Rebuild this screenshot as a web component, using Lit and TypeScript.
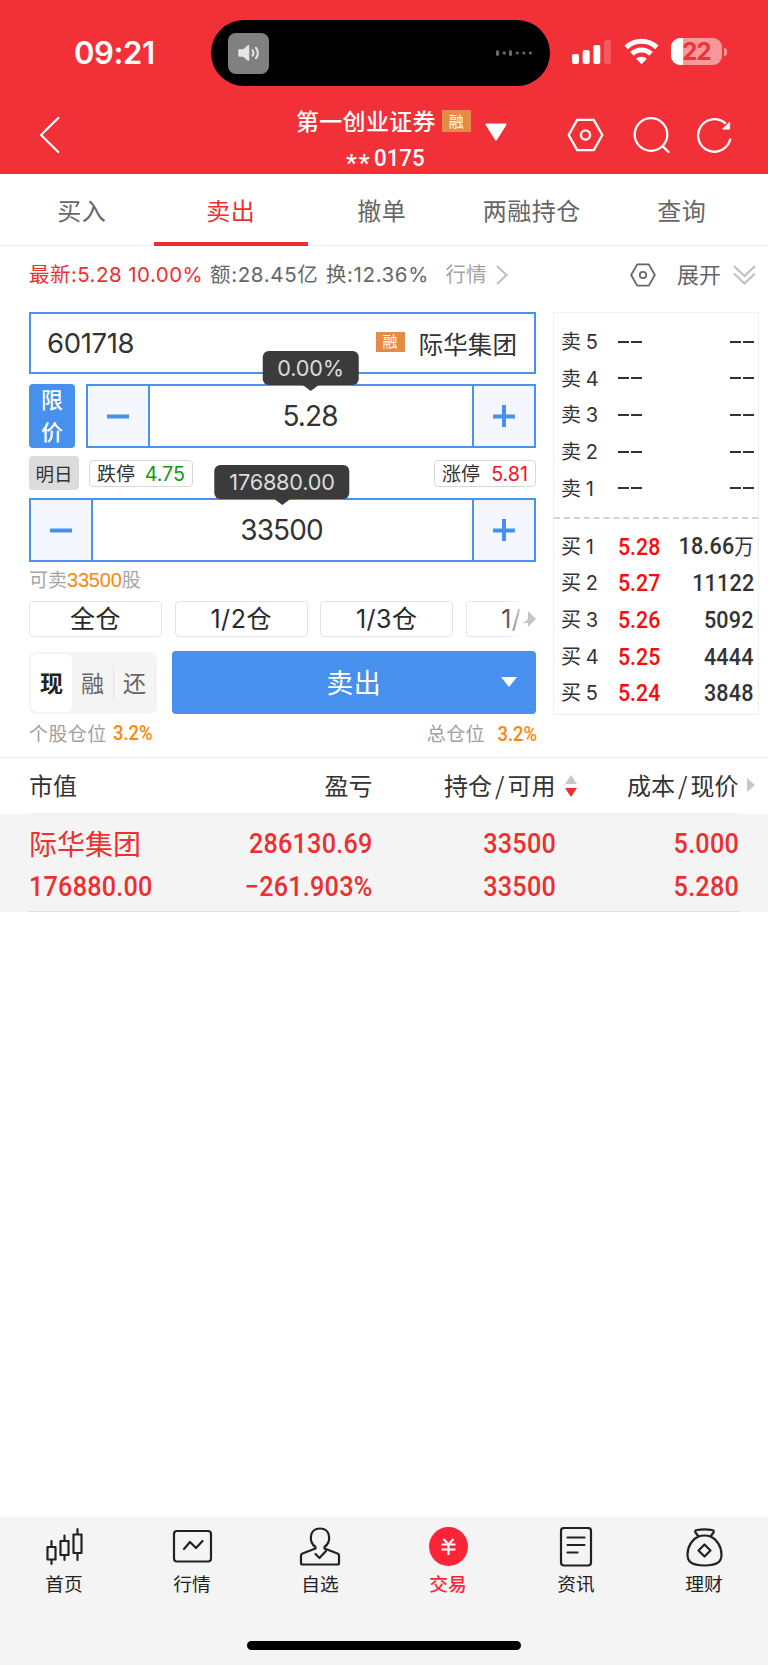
import { LitElement, html, css, svg } from "lit";
import { customElement, property } from "lit/decorators.js";
import { classMap } from "lit/directives/class-map.js";

const hexagon = (w: number, h: number, stroke: number) => html`
  <svg width=${w} height=${h} viewBox="0 0 38 34" fill="none" stroke="currentColor" stroke-width=${stroke} stroke-linejoin="round">
    <path d="M10.5 1.5h17L36.3 17l-8.8 15.5h-17L1.7 17z" /><circle cx="19" cy="17" r="4.7" />
  </svg>`;

@customElement("status-bar")
export class StatusBar extends LitElement {
  static styles = css`
    :host { display: flex; height: 106px; align-items: flex-start; color: #fff; }
    .time { width: 211px; padding: 33px 0 0 74px; box-sizing: border-box; font: 600 31px/40px Inter, sans-serif; letter-spacing: -0.4px; }
    .island { margin-top: 20px; width: 338.5px; height: 66px; border-radius: 33px; background: #000; box-sizing: border-box; padding: 0 17px; display: flex; align-items: center; justify-content: space-between; }
    .tile { width: 41px; height: 41px; border-radius: 8px; background: #808080; display: flex; align-items: center; justify-content: center; }
    .signal { margin: 39px 0 0 22.5px; }
    .wifi { margin: 38px 0 0 13px; }
    .battery { margin: 38px 0 0 12px; width: 51px; height: 27px; border-radius: 9px; background: linear-gradient(90deg, #fff 12px, #f9989b 12px); color: #f23037; font: 700 24px/27px Inter, sans-serif; text-align: center; letter-spacing: -0.9px; }
    .nub { margin: 48px 0 0 2px; width: 3px; height: 8px; border-radius: 0 3px 3px 0; background: #f9989b; }
  `;
  render() {
    return html`
      <div class="time">09:21</div>
      <div class="island">
        <div class="tile">
          <svg width="22" height="18" viewBox="0 0 22 18" fill="none">
            <path d="M1.5 5.2h3.7L9.6 1.4c.7-.6 1.6-.3 1.6.6v14c0 .9-.9 1.2-1.6.6l-4.4-3.8H1.5C.7 12.8 .3 12.4 .3 11.6V6.4C.3 5.6 .7 5.2 1.5 5.2z" fill="#e6e6e6" />
            <path d="M14.5 6.2q1.9 2.800 0 5.600M18 3.800q3.700 5.200 0 10.400" stroke="#e6e6e6" stroke-width="2" stroke-linecap="round" />
          </svg>
        </div>
        <svg width="38" height="8" viewBox="0 0 38 8" fill="#6a6a6a">
          <rect x="1" y="1" width="3" height="6" rx="1.5" /><circle cx="9.2" cy="4" r="1.700" /><rect x="14" y="1" width="3" height="6" rx="1.5" />
          <circle cx="22.2" cy="4" r="1.6" /><circle cx="28.8" cy="4" r="1.6" /><circle cx="35.4" cy="4" r="1.6" />
        </svg>
      </div>
      <svg class="signal" width="39" height="25" viewBox="0 0 39 25" fill="#fff">
        <rect x="0" y="15" width="7" height="10" rx="2" /><rect x="10.7" y="11" width="7" height="14" rx="2" />
        <rect x="21.3" y="6" width="7" height="19" rx="2" /><rect x="32" y="1" width="7" height="24" rx="2" opacity=".2" />
      </svg>
      <svg class="wifi" width="35" height="27" viewBox="0 0 35 27" fill="none" stroke="#fff" stroke-width="5">
        <path d="M2.2 9.4a22 22 0 0 1 30.6 0M8 15.9a13.5 13.5 0 0 1 19 0" />
        <path d="M17.5 26.2l-5.400-5.400a7.800 7.800 0 0 1 10.800 0z" fill="#fff" stroke="none" />
      </svg>
      <div class="battery">22</div><div class="nub"></div>`;
  }
}

@customElement("account-bar")
export class AccountBar extends LitElement {
  static styles = css`
    :host { display: grid; grid-template-columns: 296px 1fr 201px; height: 68px; color: #fff; }
    .back { margin: 10px 0 0 39px; }
    .name { display: flex; height: 30px; align-items: center; font: 500 23px/28px "Noto Sans CJK SC", sans-serif; letter-spacing: 0.3px; }
    .name-text { margin-top: -3px; }
    .badge { width: 29px; height: 22px; margin-left: 6px; background: #e48b46; font-size: 15px; line-height: 21px; text-align: center; font-weight: 400; letter-spacing: 0; }
    .number { display: flex; padding-left: 50px; font: 500 24.500px/28px Roboto, sans-serif; margin-top: 8px; }
    .stars { letter-spacing: 2px; margin: 5px 2px 0 0; height: 20px; }
    .digits { transform: scaleX(0.91); transform-origin: left; }
    .account { position: relative; }
    .caret { position: absolute; left: 189px; top: 17px; }
    .tools { display: flex; align-items: flex-start; padding-top: 11px; }
    .tools svg:nth-child(1) { margin-top: 1px; }
    .tools svg:nth-child(2) { margin-left: 29px; }
    .tools svg:nth-child(3) { margin-left: 26px; }
  `;
  render() {
    return html`
      <svg class="back" width="22" height="38" viewBox="0 0 22 38" fill="none" stroke="#fff" stroke-width="2.2" stroke-linecap="round" stroke-linejoin="round"><path d="M19.3 2L2 19l17.3 17" /></svg>
      <div class="account">
        <div class="name"><span class="name-text">第一创业证券</span><span class="badge">融</span></div>
        <div class="number"><span class="stars">**</span><span class="digits">0175</span></div>
        <svg class="caret" width="22" height="18" viewBox="0 0 22 18" fill="#fff" stroke="#fff" stroke-width="2" stroke-linejoin="round"><path d="M1.5 1.5h19L11 16.5z" /></svg>
      </div>
      <div class="tools">
        ${hexagon(37, 34, 2.4)}
        <svg width="37" height="37" viewBox="0 0 37 37" fill="none" stroke="#fff" stroke-width="2.3" stroke-linecap="round"><circle cx="18" cy="17.5" r="16.3" /><path d="M29.5 29.2l6 5.800" /></svg>
        <svg width="37" height="37" viewBox="0 0 37 37" fill="none" stroke="#fff" stroke-width="2.3" stroke-linecap="round"><path d="M34.2 22.5A16.3 16.3 0 1 1 29 6" /><path d="M33.6 5.500v6.500h-6.500z" fill="#fff" stroke-width="1" stroke-linejoin="round" /></svg>
      </div>`;
  }
}

@customElement("value-stepper")
export class ValueStepper extends LitElement {
  @property() value = "";
  @property() hint = "";
  static styles = css`
    :host { position: relative; display: flex; height: 64px; box-sizing: border-box; border: 2px solid #4a92ee; flex: 1; }
    .key { width: 62px; background: #f4f8fe; display: flex; align-items: center; justify-content: center; }
    .minus { border-right: 2px solid #4a92ee; box-sizing: border-box; }
    .plus { border-left: 2px solid #4a92ee; box-sizing: border-box; }
    .value { flex: 1; text-align: center; font: 400 28px/60px Inter, "Noto Sans CJK SC", sans-serif; color: #333; letter-spacing: -0.9px; text-indent: -2px; }
    .hint { position: absolute; bottom: 61px; left: calc(50% - 0.5px); transform: translateX(-50%); background: #3b3b3b; border-radius: 6px; color: #dcdcdc; font: 400 21.700px/34px Inter, sans-serif; padding: 0 15px; letter-spacing: -0.2px; }
    .hint::after { content: ""; position: absolute; left: 50%; top: 100%; margin-left: -8px; border: 8px solid transparent; border-bottom-width: 0; border-top: 6px solid #3b3b3b; }
  `;
  render() {
    return html`
      <div class="key minus"><svg width="22" height="22"><rect y="9.5" width="22" height="4" fill="#4790ee" /></svg></div>
      <div class="value">${this.value}</div>
      <div class="key plus"><svg width="22" height="22"><path d="M0 9.500h22v4H0zM9 0h4v22H9z" fill="#4790ee" /></svg></div>
      <div class="hint">${this.hint}</div>`;
  }
}

@customElement("order-form")
export class OrderForm extends LitElement {
  static styles = css`
    :host { display: block; width: 507px; font-family: Inter, "Noto Sans CJK SC", sans-serif; color: #333; }
    .stock { height: 62px; box-sizing: border-box; border: 2px solid #4a92ee; display: flex; align-items: center; padding: 0 17px 0 16px; }
    .code { flex: 1; font-size: 27.500px; letter-spacing: -0.35px; }
    .badge { width: 29px; height: 20px; background: #e48b46; color: #fff; font-size: 15px; line-height: 19px; text-align: center; margin-top: -2px; }
    .stock-name { font-size: 24.500px; margin-left: 14px; letter-spacing: 0.1px; }
    .price { display: flex; margin-top: 10px; gap: 11px; }
    .type { width: 46px; height: 64px; border-radius: 4px; background: #4790ee; color: #fff; font-size: 22px; line-height: 32px; font-weight: 500; text-align: center; }
    .limits { display: flex; align-items: center; height: 50px; }
    .day { width: 50px; height: 34px; border-radius: 4px; background: #dcdcdc; font-size: 18.500px; line-height: 36px; text-align: center; margin-right: 10px; }
    .pill { box-sizing: border-box; height: 27px; border: 1px solid #d8d8d8; border-radius: 4px; font-size: 19px; line-height: 27px; padding: 0 7px; display: flex; justify-content: space-between; }
    .down { width: 104px; } .down b { color: #0c9c0c; }
    .up { width: 102px; margin-left: auto; } .up b { color: #fa1028; }
    .pill b { font-weight: 400; font-size: 19.700px; }
    .available { height: 39px; line-height: 38px; font-size: 19px; color: #a5a5a5; }
    .available b { font: 400 20px "Liberation Sans", sans-serif; color: #ff860d; letter-spacing: -0.2px; }
    .portions { position: relative; display: flex; gap: 12.400px; overflow: hidden; height: 36px; }
    .portion { flex: none; width: 133.200px; box-sizing: border-box; border: 1.500px solid #e4e4e4; border-radius: 4px; text-align: center; font-size: 25px; line-height: 35px; color: #2a2a2a; letter-spacing: 0.5px; }
    .fade { position: absolute; right: 0; top: 0; width: 34px; height: 36px; background: linear-gradient(90deg, #fff0, #fff 70%); }
    .more { position: absolute; right: 0; top: 10px; }
    .actions { display: flex; margin-top: 14px; height: 63px; gap: 14.500px; }
    .modes { width: 128px; box-sizing: border-box; height: 62px; margin-top: 1px; border-radius: 7px; background: #f4f4f4; padding: 2px; display: flex; align-items: center; font-size: 23px; color: #666; }
    .mode { flex: 1; text-align: center; line-height: 34px; padding-top: 1px; }
    .mode + .mode + .mode { border-left: 1px solid #e4e4e4; }
    .mode.on { flex: none; width: 41px; height: 57px; line-height: 58px; border-radius: 6px; background: #fff; font-weight: 700; color: #222; }
    .sell { position: relative; flex: 1; border-radius: 4px; background: #4790ee; color: #fff; font-size: 27px; line-height: 65px; text-align: center; letter-spacing: 0.4px; }
    .sell svg { position: absolute; right: 19px; top: 26px; }
    .share { display: flex; height: 37px; align-items: center; font-size: 19px; color: #a0a0a0; letter-spacing: 0.4px; }
    .share b { display: inline-block; font: 500 20px Roboto, sans-serif; color: #ff860d; margin-left: 6px; letter-spacing: 0; transform: scaleX(0.92); transform-origin: left; }
    .total { margin-left: auto; margin-right: -1px; }
    .total b { margin-left: 9px; transform-origin: right; }
  `;
  render() {
    return html`
      <div class="stock"><span class="code">601718</span><span class="badge">融</span><span class="stock-name">际华集团</span></div>
      <div class="price"><div class="type">限<br />价</div><value-stepper value="5.28" hint="0.00%"></value-stepper></div>
      <div class="limits">
        <span class="day">明日</span>
        <span class="pill down">跌停<b>4.75</b></span><span class="pill up">涨停<b>5.81</b></span>
      </div>
      <value-stepper value="33500" hint="176880.00"></value-stepper>
      <div class="available">可卖<b>33500</b>股</div>
      <div class="portions">
        ${["全仓", "1/2仓", "1/3仓", "1/4仓"].map((p) => html`<div class="portion">${p}</div>`)}
        <div class="fade"></div>
        <svg class="more" width="12" height="16" viewBox="0 0 12 16" fill="#c4c4c4"><path d="M4 0l8 8-8 8v-4H0l4-4z" /></svg>
      </div>
      <div class="actions">
        <div class="modes">${["现", "融", "还"].map((m, i) => html`<span class=${classMap({ mode: true, on: i === 0 })}>${m}</span>`)}</div>
        <div class="sell">卖出<svg width="16" height="10"><path d="M0 0h16L8 10z" fill="#fff" /></svg></div>
      </div>
      <div class="share"><span>个股仓位</span><b>3.2%</b><span class="total">总仓位<b>3.2%</b></span></div>`;
  }
}

@customElement("order-book")
export class OrderBook extends LitElement {
  static styles = css`
    :host { display: block; box-sizing: border-box; width: 206px; height: 402.500px; border: 1.500px solid #f0f0f0; color: #333; padding-top: 11px; }
    .row { display: grid; grid-template-columns: 57px 1fr auto; height: 36.600px; align-items: center; padding: 0 4px 0 7px; font: 500 23.700px/36px Roboto, "Noto Sans CJK SC", sans-serif; }
    .label { font: 400 20px/36px Inter, "Noto Sans CJK SC", sans-serif; word-spacing: -1px; }
    .price { color: #fe0808; transform: scaleX(0.9); transform-origin: left; }
    .volume { transform: scaleX(0.91); transform-origin: right; letter-spacing: 0.2px; }
    .dash { display: flex; gap: 2px; margin-top: -1px; }
    .dash i { width: 11px; height: 2px; background: #333; }
    .split { margin: 10px 0 9.500px; border-top: 2px dashed #d4d4d4; }
    .unit { font-weight: 400; font-size: 21.500px; letter-spacing: 0; }
  `;
  render() {
    const dash = html`<span class="dash"><i></i><i></i></span>`;
    const buys = [["5.28", "18.66"], ["5.27", "11122"], ["5.26", "5092"], ["5.25", "4444"], ["5.24", "3848"]];
    return html`
      ${[5, 4, 3, 2, 1].map((n) => html`<div class="row"><span class="label">卖 ${n}</span>${dash}${dash}</div>`)}
      <div class="split"></div>
      ${buys.map(([p, v], i) => html`<div class="row"><span class="label">买 ${i + 1}</span><span class="price">${p}</span><span class="volume">${v}${i === 0 ? html`<span class="unit">万</span>` : ""}</span></div>`)}`;
  }
}

@customElement("holdings-table")
export class HoldingsTable extends LitElement {
  static styles = css`
    :host { display: block; border-top: 1px solid #f1f1f1; }
    .grid { display: grid; grid-template-columns: 160px 183.500px 183px 183px; padding-left: 29px; align-items: center; text-align: right; }
    .grid > :first-child { text-align: left; }
    .head { height: 56px; font: 400 24px/53px "Noto Sans CJK SC", sans-serif; color: #333; align-items: start; }
    .head span { position: relative; }
    .slash { padding: 0 3px; font-style: normal; }
    .sort { position: absolute; left: 100%; top: 16px; margin-left: 8px; }
    .next { position: absolute; left: 100%; top: 20px; margin-left: 8px; }
    .body { background: #f4f4f4; height: 98px; box-sizing: border-box; position: relative; color: #ed2f30; font: 500 28px/43px Roboto, sans-serif; padding-top: 8px; }
    .body::before, .body::after { content: ""; position: absolute; left: 29px; width: 710px; height: 1.500px; background: #dedede; }
    .body::before { top: -1px; background: #f1f1f1; } .body::after { bottom: 0; }
    .number { transform: scaleX(0.9); transform-origin: right; letter-spacing: 0.25px; }
    .number:first-child { transform-origin: left; }
    .name { font: 400 28px/43px "Noto Sans CJK SC", sans-serif; }
  `;
  render() {
    return html`
      <div class="grid head">
        <span>市值</span><span>盈亏</span>
        <span>持仓<i class="slash">/</i>可用<svg class="sort" width="14" height="24"><path d="M1 10L7 1l6 9z" fill="#c8c8c8" /><path d="M1 14h12l-6 9z" fill="#ed2f30" /></svg></span>
        <span>成本<i class="slash">/</i>现价<svg class="next" width="8" height="14"><path d="M0 0l8 7-8 7z" fill="#c8c8c8" /></svg></span>
      </div>
      <div class="body">
        <div class="grid"><span class="name">际华集团</span><span class="number">286130.69</span><span class="number">33500</span><span class="number">5.000</span></div>
        <div class="grid"><span class="number">176880.00</span><span class="number">−261.903%</span><span class="number">33500</span><span class="number">5.280</span></div>
      </div>`;
  }
}

const tabs = [
  { label: "首页", icon: svg`<path d="M5.500 20h8v12.500h-8zM9.500 14v6M9.500 32.500V37M18.500 14h8v14h-8zM22.500 8.500V14M22.500 28v5M31.500 7.500h8V26h-8zM35.500 2v5.500M35.500 26v7" />` },
  { label: "行情", icon: svg`<rect x="4" y="4" width="37" height="30.500" rx="3" /><path d="M14 22l6-7 6 6 6.500-7" />` },
  { label: "自选", icon: svg`<path d="M17.500 20c-4-3-5-6-4.600-10C13.300 4.500 17 1.500 22 1.500s8.700 3 9.100 8.500c.4 4-.6 7-4.600 10v1.500l13 5c1 .5 1.500 1 1.500 2V36c0 1-.5 1.500-1.500 1.500h-35C3.500 37.500 3 37 3 36v-7.500c0-1 .5-1.500 1.500-2l13-5z" /><path d="M17.500 27l4 4 6.500-7" />` },
  { label: "交易", active: true, icon: svg`<circle cx="22.500" cy="19.500" r="19.500" fill="#fe2438" stroke="none" /><path d="M17.500 12l5 5.500 5-5.500M22.500 17.500v10.500M15.500 17.500h14M15.500 22.500h14" stroke="#fff" stroke-width="2.200" stroke-linecap="butt" />` },
  { label: "资讯", icon: svg`<rect x="7" y="1" width="30" height="37.500" rx="3" /><path d="M13.500 10.500h17M13.500 18h17M13.500 25.500h10" />` },
  { label: "理财", icon: svg`<path d="M16.500 9.500l-3-4c-.8-1 0-2.500 1.500-2.500q7.500-1.200 15 0c1.500 0 2.300 1.500 1.500 2.500l-3 4M16.500 9.500q6-2 12 0c6 2.500 11 10 11 18 0 6.500-3 11-17 11s-17-4.500-17-11c0-8 5-15.500 11-18z" /><path d="M22.500 17.500l6 6-6 6-6-6z" />` },
];

@customElement("tab-bar")
export class TabBar extends LitElement {
  static styles = css`
    :host { display: block; height: 148px; background: #f4f4f4; }
    .tabs { display: grid; grid-template-columns: repeat(6, 1fr); height: 124px; }
    .tab { display: flex; flex-direction: column; align-items: center; padding-top: 10px; font: 400 18.700px/26px "Noto Sans CJK SC", sans-serif; color: #222; gap: 2.500px; }
    .active { color: #fe2438; font-weight: 500; }
    .home { width: 274px; height: 9px; border-radius: 5px; background: #000; margin: 0 auto; }
  `;
  render() {
    return html`
      <div class="tabs">${tabs.map((t) => html`
        <div class=${classMap({ tab: true, active: !!t.active })}>
          <svg width="45" height="40" viewBox="0 0 45 40" fill="none" stroke="#222" stroke-width="2.2" stroke-linecap="round" stroke-linejoin="round">${t.icon}</svg>
          <span>${t.label}</span>
        </div>`)}</div>
      <div class="home"></div>`;
  }
}

@customElement("app-root")
export class AppRoot extends LitElement {
  static styles = css`
    :host { display: flex; flex-direction: column; width: 768px; height: 1665px; background: #fff; overflow: hidden; }
    .top { background: #f23037; height: 174px; }
    .tabs { display: grid; grid-template-columns: repeat(5, 150px); padding: 0 9px 0 7px; height: 72px; box-sizing: border-box; border-bottom: 1.500px solid #efefef; font: 400 24px/72px "Noto Sans CJK SC", sans-serif; letter-spacing: 0.5px; text-indent: -0.5px; color: #666; text-align: center; }
    .tab.on { color: #ed2f30; box-shadow: inset 0 -4px #ed2f30; height: 72px; margin: 0 -1px 0 -3px; }
    .quote { display: flex; align-items: center; height: 58px; margin-bottom: 8px; padding: 0 12px 0 29px; font: 400 20.500px/58px Inter, "Noto Sans CJK SC", sans-serif; color: #666; white-space: nowrap; }
    .latest { color: #ed2f30; width: 181px; letter-spacing: 0.45px; }
    .amount { width: 116px; letter-spacing: 0.65px; } .turn { width: 119.500px; letter-spacing: 0.6px; }
    .link { color: #a5a5a5; margin-right: 8.500px; letter-spacing: 0.3px; }
    .gear { margin: 0 21px 0 auto; display: flex; }
    .expand { margin-right: 12px; font-size: 22px; }
    .trade { display: flex; padding-left: 29px; gap: 17px; height: 445px; flex: none; }
    tab-bar { margin-top: auto; }
    .top, .tabs, .quote { flex: none; }
  `;
  render() {
    return html`
      <div class="top"><status-bar></status-bar><account-bar></account-bar></div>
      <div class="tabs">${["买入", "卖出", "撤单", "两融持仓", "查询"].map((t, i) => html`<span class=${classMap({ tab: true, on: i === 1 })}>${t}</span>`)}</div>
      <div class="quote">
        <span class="latest">最新:5.28 10.00%</span><span class="amount">额:28.45亿</span><span class="turn">换:12.36%</span>
        <span class="link">行情</span>
        <svg width="12" height="20" viewBox="0 0 12 20" fill="none" stroke="#c0c0c0" stroke-width="2"><path d="M1 1l9.500 9L1 19" /></svg>
        <span class="gear">${hexagon(26, 24, 2.6)}</span>
        <span class="expand">展开</span>
        <svg width="23" height="22" viewBox="0 0 23 22" fill="none" stroke="#c0c0c0" stroke-width="2"><path d="M1 2l10.500 10L22 2M1 9.500l10.500 10L22 9.500" /></svg>
      </div>
      <div class="trade"><order-form></order-form><order-book></order-book></div>
      <holdings-table></holdings-table>
      <tab-bar></tab-bar>`;
  }
}
